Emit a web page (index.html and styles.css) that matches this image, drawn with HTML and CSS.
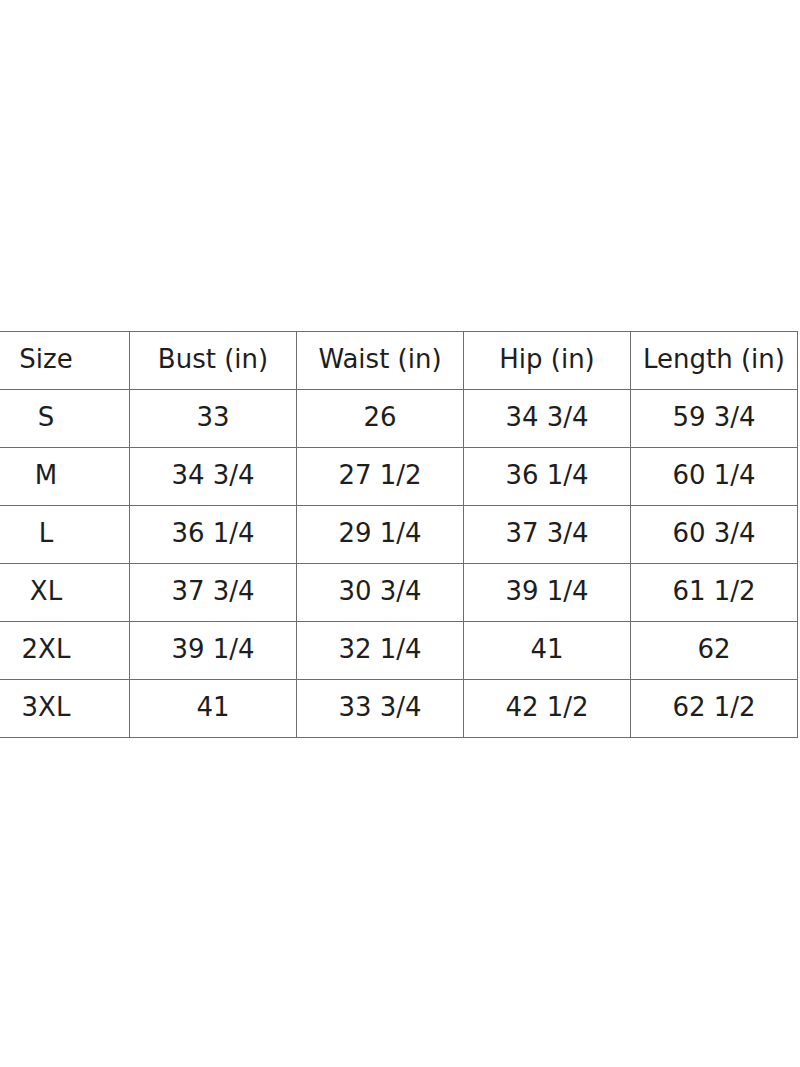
FILE: index.html
```html
<!DOCTYPE html>
<html>
<head>
<meta charset="utf-8">
<link rel="stylesheet" href="styles.css">
</head>
<body>
<div class="page">
<table class="size-table">
<tr><td>Size</td><td>Bust (in)</td><td>Waist (in)</td><td>Hip (in)</td><td>Length (in)</td></tr>
<tr><td>S</td><td>33</td><td>26</td><td>34 3/4</td><td>59 3/4</td></tr>
<tr><td>M</td><td>34 3/4</td><td>27 1/2</td><td>36 1/4</td><td>60 1/4</td></tr>
<tr><td>L</td><td>36 1/4</td><td>29 1/4</td><td>37 3/4</td><td>60 3/4</td></tr>
<tr><td>XL</td><td>37 3/4</td><td>30 3/4</td><td>39 1/4</td><td>61 1/2</td></tr>
<tr><td>2XL</td><td>39 1/4</td><td>32 1/4</td><td>41</td><td>62</td></tr>
<tr><td>3XL</td><td>41</td><td>33 3/4</td><td>42 1/2</td><td>62 1/2</td></tr>
</table>
</div>
</body>
</html>
```
FILE: styles.css
```css
html, body {
  margin: 0;
  padding: 0;
  background: #fff;
}
.page {
  width: 800px;
  height: 1067px;
  overflow: hidden;
  padding-top: 331px;
  box-sizing: border-box;
}
.size-table {
  margin-left: -38px;
  border-collapse: collapse;
  table-layout: fixed;
  width: 836px;
  font-family: "DejaVu Sans", sans-serif;
  font-size: 26px;
  color: #1e1e1e;
}
.size-table td {
  width: 166px;
  height: 54px;
  padding: 0 0 3px 0;
  border: 1px solid #6e6e6e;
  text-align: center;
  vertical-align: middle;
}
```
